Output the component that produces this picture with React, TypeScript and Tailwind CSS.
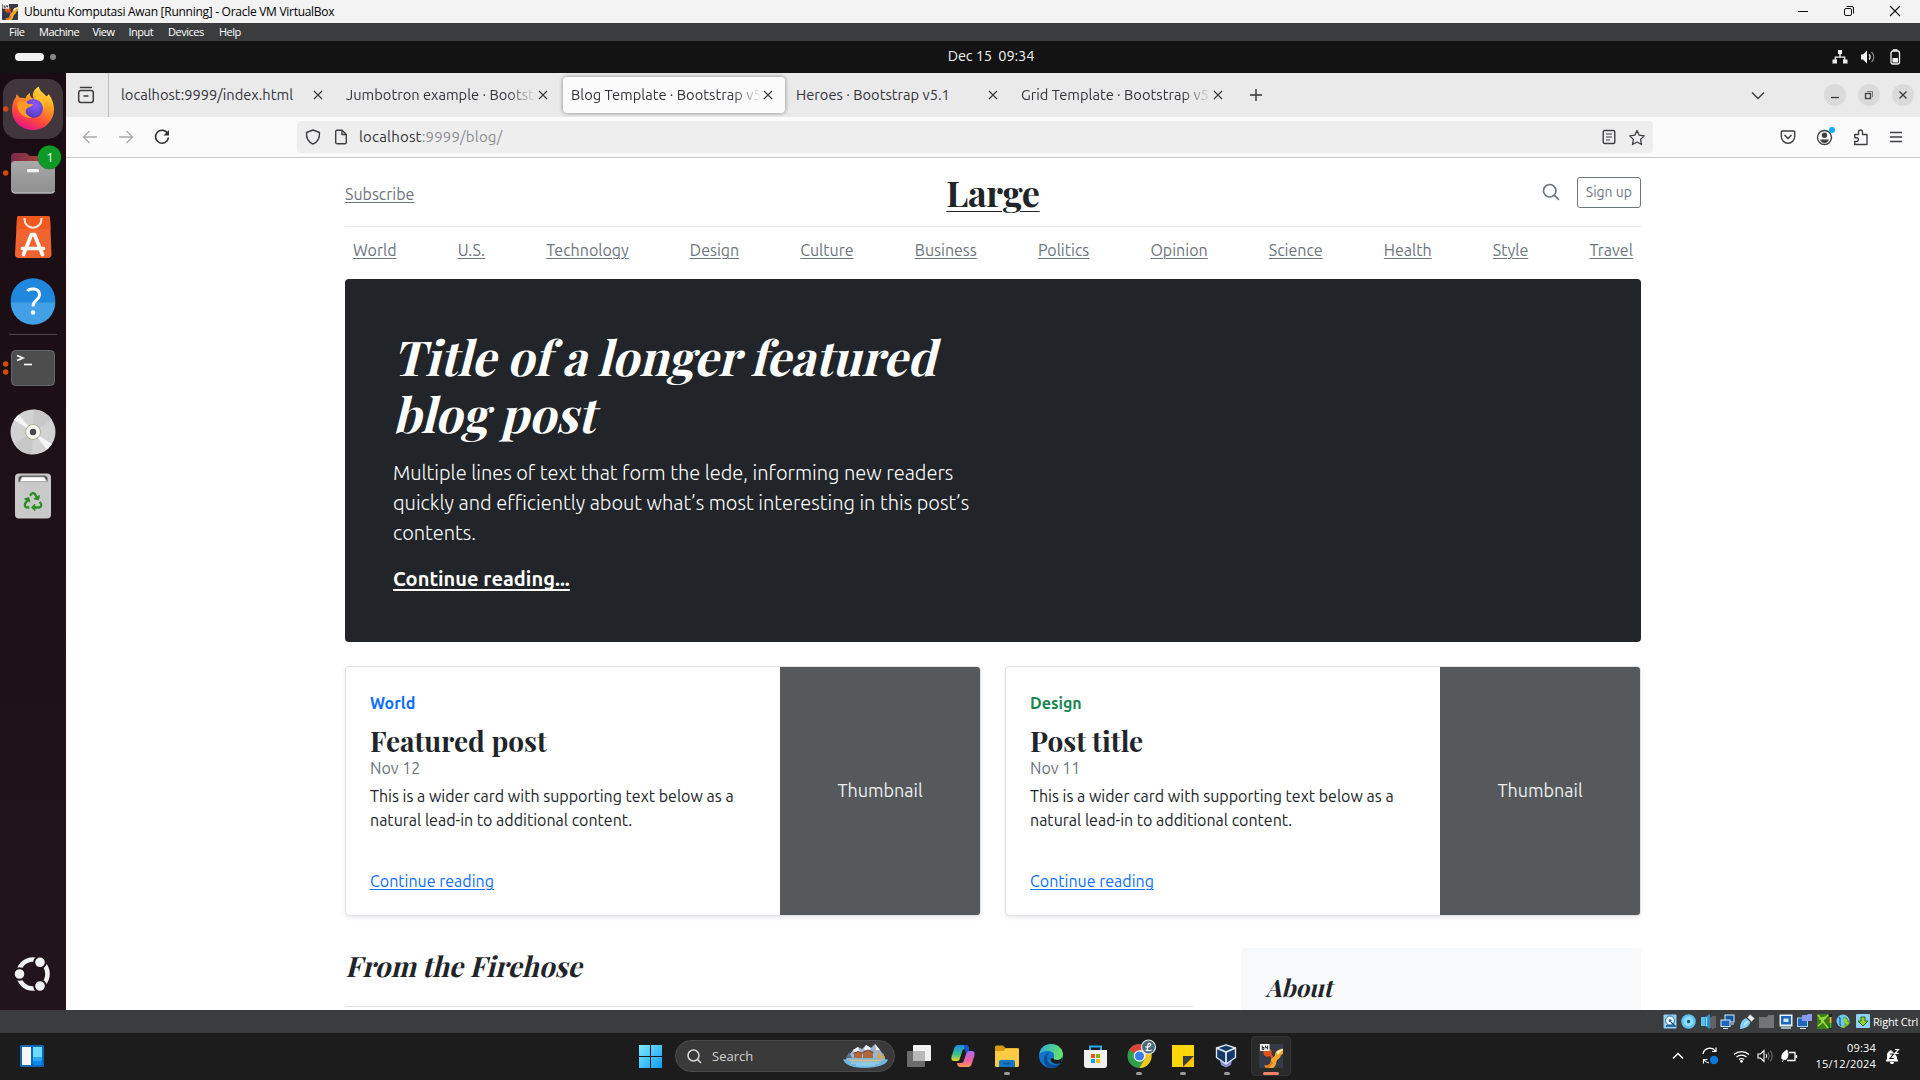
import type { ReactNode } from "react";
import { FaRecycle } from "react-icons/fa";

const UI = "font-['Ubuntu_Sans','Ubuntu','Open_Sans',sans-serif]";
const WIN = "font-['Open_Sans','Noto_Sans',sans-serif]";
const DISPLAY = "font-['Playfair_Display','Liberation_Serif',serif] font-bold";

function Svg({ w, h, vb, children, className }: { w: number; h: number; vb?: string; children: ReactNode; className?: string }) {
  return (
    <svg width={w} height={h} viewBox={vb ?? `0 0 ${w} ${h}`} fill="none" className={`block shrink-0 ${className ?? ""}`}>
      {children}
    </svg>
  );
}

/* ---------- VirtualBox window chrome ---------- */

function VmLogo({ size }: { size: number }) {
  return (
    <Svg w={size} h={size} vb="0 0 24 24">
      <rect width="24" height="24" rx="1" fill="#343a48" />
      <path d="M5 21.500C9 22 12 20 12 16C12 13.500 15 14 16 11C16.500 8 17 6 24 4.500V10C21 10.500 22 13 20 14.500C17.500 16 17.500 17 17 19.500C16.500 22 15.500 23 14 24H7Z" fill="#f6a531" />
      <path d="M6 21.500C9 22 12 20 12 16.500L14 19L10 24H7Z" fill="#e07a18" />
      <path d="M17.500 8C19 6.500 21 5.500 24 5V6.500C21 7.500 20 9 19 11Z" fill="#fff0b8" />
      <circle cx="8.500" cy="8.500" r="4.200" fill="#e2511a" />
      <path d="M11 10.500L13.500 13.500" stroke="#e2511a" strokeWidth="2.500" />
      <rect x="1" width="9.500" height="7" fill="#fff" />
      <path d="M3.200 1.500V5.500H5V3.500H3.200M6.500 1.500V3.800H9M8.600 1.500V5.500" stroke="#222" strokeWidth="1" />
    </Svg>
  );
}

function TitleBar() {
  return (
    <div className={`flex h-[23px] shrink-0 items-center bg-[#f3f3f3] pl-0.5 text-black ${WIN}`}>
      <VmLogo size={16} />
      <span className="ml-1.5 text-[12px] leading-4 tracking-[-0.28px]">Ubuntu Komputasi Awan [Running] - Oracle VM VirtualBox</span>
      <div className="mb-0.5 ml-auto flex">
        <div className="flex w-[46px] justify-center"><Svg w={12} h={12}><path d="M1 6.500H11" stroke="#111" /></Svg></div>
        <div className="flex w-[46px] justify-center">
          <Svg w={12} h={12}>
            <rect x="1.500" y="3.500" width="7" height="7" rx="1.500" stroke="#111" />
            <path d="M3.500 1.500H9A1.800 1.800 0 0 1 10.500 3V8.500" stroke="#111" />
          </Svg>
        </div>
        <div className="flex w-[46px] justify-center"><Svg w={12} h={12}><path d="M1 1L11 11M11 1L1 11" stroke="#111" strokeWidth="1.100" /></Svg></div>
        <div className="w-0.5" />
      </div>
    </div>
  );
}

function MenuBar() {
  return (
    <div className={`flex h-[18px] shrink-0 items-center bg-[#3b3c3e] pl-[9px] text-[11px] leading-4 tracking-[-0.5px] text-white ${WIN}`}>
      <span className="w-[30px]">File</span>
      <span className="w-[53.500px]">Machine</span>
      <span className="w-[36px]">View</span>
      <span className="w-[39.500px]">Input</span>
      <span className="w-[51px]">Devices</span>
      <span>Help</span>
    </div>
  );
}

function StatusBar() {
  return (
    <div className={`flex h-[23px] shrink-0 items-center justify-end gap-[4.500px] bg-[#3b3c3e] pr-0.5 text-white ${WIN}`}>
      <Svg w={14} h={15}>
        <rect x=".5" y=".5" width="13" height="14" rx="1" fill="#8ed3f7" />
        <circle cx="7" cy="6.500" r="4.500" fill="#fff" stroke="#1b6fae" />
        <circle cx="7" cy="6.500" r="1.500" fill="#1b6fae" />
        <path d="M8 8L12 12H3" stroke="#174f80" strokeWidth="1.300" />
      </Svg>
      <Svg w={15} h={15}>
        <circle cx="7.500" cy="7.500" r="7.300" fill="#5cc0ef" />
        <circle cx="7.500" cy="7.500" r="5" fill="#8fdcfb" />
        <circle cx="7.500" cy="7.500" r="1.700" fill="#0d5c94" />
      </Svg>
      <Svg w={15} h={15}>
        <path d="M0 3H4V12H0Z" fill="#5cc0ef" />
        <path d="M4 3L9 0V15L4 12Z" fill="#2e8fd0" />
        <path d="M5.500 3V12" stroke="#9adcf9" strokeWidth="1.200" />
        <path d="M10 3V14M12 2V15M14 2V14" stroke="#777" strokeWidth="1.300" />
      </Svg>
      <Svg w={15} h={15}>
        <rect x="5" y="1" width="9" height="7" fill="#1756a3" stroke="#d7ebf8" />
        <rect x="1" y="6" width="9" height="6.500" fill="#1d66bb" stroke="#d7ebf8" />
        <path d="M3 14.500H8M11 10H14" stroke="#d7ebf8" />
      </Svg>
      <Svg w={15} h={15}>
        <path d="M0 15C0 9 2 6 6 4L10.500 8C9 12.500 6 14.500 0 15Z" fill="#7fd0f8" />
        <path d="M7.500 3.500L10 .5L14.500 4.500L11.500 7.500Z" fill="#f3f3f3" stroke="#999" strokeWidth=".6" />
        <path d="M4 11L8 7" stroke="#c7ecfd" strokeWidth="1.500" />
      </Svg>
      <Svg w={15} h={15}><path d="M0 3H8L9.500 1H15V14H0Z" fill="#737475" /></Svg>
      <Svg w={14} h={15}>
        <rect x=".5" y=".5" width="13" height="12" fill="#e4f3fd" />
        <rect x="2" y="2" width="10" height="8.500" fill="#1d66bb" />
        <rect x="4.500" y="4.500" width="5" height="3.500" fill="#cfe8fa" />
        <path d="M2 14H12" stroke="#b7d6ea" strokeWidth="1.500" />
      </Svg>
      <Svg w={15} h={15}>
        <rect x=".5" y="4" width="10" height="8.500" fill="#1d66bb" stroke="#a9d4f1" />
        <path d="M5 1H10L11 0H15V7H5Z" fill="#8b9af0" />
        <path d="M3 14.500H9" stroke="#d7ebf8" />
      </Svg>
      <Svg w={15} h={15}>
        <rect width="12" height="15" fill="#3f7d1c" />
        <path d="M1 1L11 14M11 1L4 8M1 12L7 7M2 5L9 3" stroke="#9be03c" strokeWidth="1.500" />
        <rect x="12" width="3" height="15" fill="#222" />
        <path d="M13.500 3V9" stroke="#f0c51d" strokeWidth="2" />
        <path d="M13.500 9V14" stroke="#2fc52a" strokeWidth="2" />
      </Svg>
      <Svg w={15} h={15}>
        <circle cx="7" cy="7" r="6.500" fill="#6ec6f2" />
        <path d="M3 3C6 6 2 8 5 12" stroke="#1d74b5" strokeWidth="1.500" />
        <path d="M7 4Q12 3 12 8H14.500L11.500 12L8 8.500M9 10V14H5" stroke="#3a6b12" strokeWidth=".6" fill="#8fd430" />
      </Svg>
      <Svg w={14} h={15}>
        <rect width="14" height="14" rx="1" fill="#8ed3f7" />
        <path d="M5 3H9V7H12L7 12L2 7H5Z" fill="#8fd430" stroke="#2f6b12" />
      </Svg>
      <span className="-ml-px text-[11px] leading-4 tracking-[-0.22px]">Right Ctrl</span>
    </div>
  );
}

/* ---------- GNOME shell ---------- */

function TopBar() {
  return (
    <div className={`flex h-8 shrink-0 items-center bg-[#131313] pr-[18px] text-[#f2f2f2] ${UI}`}>
      <div className="flex w-[66px] items-center gap-1.5 pl-[15px]">
        <div className="h-2 w-[29px] rounded-full bg-[#f2f2f2]" />
        <div className="size-1.5 rounded-full bg-[#878787]" />
      </div>
      <span className="mt-[-2px] flex-1 whitespace-pre pl-[18px] text-center text-[14.670px] leading-5 tracking-[-0.15px]">Dec 15  09:34</span>
      <div className="-ml-[66px] flex items-center justify-end gap-[12px]">
        <Svg w={16} h={16}>
          <path d="M6 1H10V5H8.700V7.500H13.300V10.500H15.500V14.500H11V10.500H12V8.800H4V10.500H5V14.500H.5V10.500H2.700V7.500H7.300V5H6Z" fill="#f2f2f2" />
        </Svg>
        <Svg w={16} h={16}>
          <path d="M1 5.500H3L7 1.500V14.500L3 10.500H1Z" fill="#f2f2f2" />
          <path d="M9 5.500C10.500 7 10.500 9 9 10.500" stroke="#f2f2f2" strokeWidth="1.400" />
          <path d="M11.500 3C14.500 6 14.500 10 11.500 13" stroke="#8a8a8a" strokeWidth="1.300" />
        </Svg>
        <Svg w={14} h={16}>
          <rect x="3" y="2" width="8.500" height="13" rx="2" stroke="#f2f2f2" strokeWidth="1.300" />
          <path d="M5 1H9.500" stroke="#f2f2f2" strokeWidth="1.600" />
          <rect x="4.500" y="9" width="5.500" height="4.500" fill="#f2f2f2" />
        </Svg>
      </div>
    </div>
  );
}

function Tile({ children }: { children: ReactNode }) {
  return <Svg w={66} h={64}>{children}</Svg>;
}

function Launcher() {
  return (
    <div className="flex w-[66px] shrink-0 flex-col bg-linear-to-b from-[#190d13] to-[#22141c] pt-1">
      <Tile>
        <defs>
          <linearGradient id="ffBody" x1=".8" y1="0" x2=".3" y2="1">
            <stop offset="0" stopColor="#fff04a" />
            <stop offset=".35" stopColor="#ffa01f" />
            <stop offset=".7" stopColor="#ff4a3c" />
            <stop offset="1" stopColor="#e3128a" />
          </linearGradient>
          <radialGradient id="ffGlobe" cx=".6" cy=".3" r=".8">
            <stop offset="0" stopColor="#9059ff" />
            <stop offset="1" stopColor="#4a35b8" />
          </radialGradient>
        </defs>
        <rect x="3" y="2" width="60" height="60" rx="15" fill="#40363b" />
        <circle cx="5.700" cy="32" r="2.700" fill="#d9480f" />
        <path d="M12 33C12 27 13.500 23 16 20L16.500 17L20 21C22 20.500 24 21 25.500 21.500C26 19 28 17 30 16C29.500 19 31 21 34 22L33 20C32 16 35 11 39 9.500C39 14 43 15 46 19C47 20 48 18 48.500 17C52 21 54 27 54 32C54 43.500 45 53 33 53C21 53 12 44 12 33Z" fill="url(#ffBody)" />
        <circle cx="33.500" cy="31.500" r="9.500" fill="url(#ffGlobe)" />
        <path d="M17 26C21 24 26 24 28 27H33C32 30 28 30 26.500 32C24 35 27 39 32 41C24 42 17 36 17 26Z" fill="#ff9a22" />
        <path d="M34 22C40 22 44 27 43.500 33C46 27 43 20 37 18Z" fill="#ffc52e" />
      </Tile>
      <Tile>
        <defs>
          <linearGradient id="filesFront" x1="0" y1="0" x2="0" y2="1">
            <stop offset="0" stopColor="#a8a8a8" />
            <stop offset="1" stopColor="#8f8f8f" />
          </linearGradient>
          <linearGradient id="filesBack" x1="0" y1="0" x2="1" y2="0">
            <stop offset="0" stopColor="#772a4c" />
            <stop offset="1" stopColor="#c4492f" />
          </linearGradient>
        </defs>
        <circle cx="5.700" cy="32" r="2.700" fill="#d9480f" />
        <path d="M11 16A4 4 0 0 1 15 12H25C28 12 28 15 31 15H51A4 4 0 0 1 55 19V30H11Z" fill="url(#filesBack)" />
        <rect x="11" y="20" width="44" height="32.500" rx="4" fill="url(#filesFront)" />
        <path d="M12 50Q13 52 15 52H51Q54 52 54.500 50" stroke="#c9c9c9" />
        <rect x="27" y="28" width="12" height="3.200" rx="1" fill="#f4f4f4" />
        <circle cx="49.500" cy="16.500" r="12" fill="#0a5a18" opacity=".6" />
        <circle cx="49.500" cy="16" r="11.500" fill="#0f9a27" />
        <text x="50" y="21" textAnchor="middle" fontSize="13" fill="#fff" className={UI}>1</text>
      </Tile>
      <Tile>
        <path d="M19 11H48A2 2 0 0 1 50 13L51.500 49A3.500 3.500 0 0 1 48 53H18.500A3.500 3.500 0 0 1 15 49L17 13A2 2 0 0 1 19 11Z" fill="#f0642f" />
        <path d="M19 11H48A2 2 0 0 1 50 13L50.500 24H16.500L17 13A2 2 0 0 1 19 11Z" fill="#f05a20" />
        <path d="M24.500 13C24 26 42 26 41.500 13" stroke="#fbe9e1" strokeWidth="2" />
        <path d="M23.500 49.500L31.500 29.500H34.500L42.500 49.500M22.500 43.500H43.500" stroke="#fff" strokeWidth="3.600" strokeLinecap="round" strokeLinejoin="round" />
      </Tile>
      <Tile>
        <circle cx="33" cy="31.500" r="22.300" fill="#1f87dc" />
        <path d="M10.700 33.500H55.300A22.300 22.300 0 0 1 10.700 33.500Z" fill="#42a1e6" />
        <path d="M27.500 22C29 19.500 39.500 18 39.500 26C39.500 31.500 33 31 33 37.500" stroke="#fff" strokeWidth="3" />
        <circle cx="33" cy="43.500" r="2.300" fill="#fff" />
      </Tile>
      <div className="mx-[9px] my-px h-px bg-[#4d444a]" />
      <Tile>
        <circle cx="5.700" cy="28" r="2.700" fill="#d9480f" />
        <circle cx="5.700" cy="36" r="2.700" fill="#d9480f" />
        <rect x="11.500" y="14.500" width="43" height="35" rx="4" fill="#4d4d4d" stroke="#666" />
        <path d="M17 19.500L23 22L17 24.500" stroke="#fff" strokeWidth="1.700" />
        <path d="M24 28.500H32" stroke="#fff" strokeWidth="1.600" />
      </Tile>
      <Tile>
        <circle cx="33" cy="32" r="22.500" fill="#d2d2d2" />
        <path d="M33 32L14 20A22.500 22.500 0 0 1 19 14.500ZM33 32L52 44A22.500 22.500 0 0 1 47 49.500Z" fill="#f4f4f4" />
        <path d="M33 32L34 9.500A22.500 22.500 0 0 1 52 20ZM33 32L32 54.500A22.500 22.500 0 0 1 14 44Z" fill="#c8c8c8" />
        <circle cx="33" cy="32" r="7.500" fill="#fafafa" stroke="#b5ad94" />
        <circle cx="33" cy="32" r="3.200" fill="#4a4a4a" />
      </Tile>
      <Tile>
        <rect x="15" y="9.500" width="36" height="45" rx="4" fill="#c9c9c9" />
        <path d="M18.500 18V14Q19 11.500 22 11.500H44Q47 11.500 47.500 14V18Z" fill="#555" />
        <path d="M20 17.500L22 13H44L47 17.500Z" fill="#fff" stroke="#aaa" strokeWidth=".7" />
        <FaRecycle x={23.500} y={28} size={19} color="#2a9022" />
      </Tile>
      <div className="mb-[3px] mt-auto">
        <Tile>
          <circle cx="33" cy="31" r="14.500" stroke="#f2f2f2" strokeWidth="4.600" />
          {[[19.500, 31], [40, 19.300], [40, 43]].map(([x, y]) => (
            <circle key={`${x}-${y}`} cx={x} cy={y} r="5.800" fill="#f2f2f2" stroke="#21141b" strokeWidth="2" />
          ))}
        </Tile>
      </div>
    </div>
  );
}

/* ---------- Firefox ---------- */

const TABS = [
  { label: "localhost:9999/index.html", fade: false, active: false },
  { label: "Jumbotron example · Bootstrap v5.1", fade: true, active: false },
  { label: "Blog Template · Bootstrap v5.1", fade: true, active: true },
  { label: "Heroes · Bootstrap v5.1", fade: false, active: false },
  { label: "Grid Template · Bootstrap v5.1", fade: true, active: false },
];

function TabStrip() {
  return (
    <div className="flex h-11 shrink-0 items-center bg-[#eaeaea]">
      <div className="flex h-full w-[42.500px] items-center justify-center border-r border-[#bfbfbf] pr-0.5">
        <Svg w={18} h={18}>
          <path d="M3.500 1.500H14.500" stroke="#3c3c3c" strokeWidth="1.400" strokeLinecap="round" />
          <rect x="1.700" y="4.500" width="14.600" height="12" rx="2.200" stroke="#3c3c3c" strokeWidth="1.500" />
          <path d="M6.500 10H11.500" stroke="#3c3c3c" strokeWidth="1.500" />
        </Svg>
      </div>
      <div className="ml-[4.500px] flex">
        {TABS.map((t) => (
          <div key={t.label} className="w-[225px] pr-[3px]">
            <div className={t.active ? "flex h-9 items-center rounded bg-[#fbfbfb] pl-2 shadow-[0_0_4px_rgba(0,0,0,.45)]" : "flex h-9 items-center pl-2"}>
              <span
                className={
                  t.fade
                    ? "w-[190px] overflow-hidden whitespace-nowrap text-[14.670px] text-[#33333a] mask-r-from-85% mask-r-to-100%"
                    : "w-[190px] overflow-hidden whitespace-nowrap text-[14.670px] text-[#33333a]"
                }
              >
                {t.label}
              </span>
              <Svg w={10} h={10} className="ml-[2px]"><path d="M1 1L9 9M9 1L1 9" stroke="#3c3c3c" strokeWidth="1.200" /></Svg>
            </div>
          </div>
        ))}
      </div>
      <Svg w={14} h={14} className="ml-[11px]"><path d="M7 1V13M1 7H13" stroke="#333" strokeWidth="1.400" /></Svg>
      <div className="ml-auto flex items-center pr-1.5">
        <Svg w={14} h={9} className="mr-[59px]"><path d="M1 1.500L7 7.500L13 1.500" stroke="#3c3c3c" strokeWidth="1.400" /></Svg>
        <div className="flex gap-3">
          <Svg w={22} h={22}><circle cx="11" cy="11" r="11" fill="#dadada" /><path d="M7 13.500H15" stroke="#3c3c3c" strokeWidth="1.300" /></Svg>
          <Svg w={22} h={22}>
            <circle cx="11" cy="11" r="11" fill="#dadada" />
            <rect x="7.500" y="9.500" width="5" height="5" stroke="#3c3c3c" strokeWidth="1.300" />
            <path d="M9 7.500H14.500V13" stroke="#777" />
          </Svg>
          <Svg w={22} h={22}><circle cx="11" cy="11" r="11" fill="#dadada" /><path d="M7.500 7.500L14.500 14.500M14.500 7.500L7.500 14.500" stroke="#3c3c3c" strokeWidth="1.400" /></Svg>
        </div>
      </div>
    </div>
  );
}

function NavBar() {
  const k = "#3f3f44";
  return (
    <div className="flex h-[41px] shrink-0 items-center border-b border-[#c6c6c6] bg-[#fbfbfb] pl-4">
      <Svg w={16} h={16}><path d="M15 8H1.500M7.500 2L1.500 8L7.500 14" stroke="#aaa" strokeWidth="1.400" /></Svg>
      <Svg w={16} h={16} className="ml-5"><path d="M1 8H14.500M8.500 2L14.500 8L8.500 14" stroke="#aaa" strokeWidth="1.400" /></Svg>
      <Svg w={16} h={16} className="ml-5">
        <path d="M13.700 4.500A6.500 6.500 0 1 0 14.500 8.500" stroke="#2f2f33" strokeWidth="1.600" />
        <path d="M15 1V6.500H9.500Z" fill="#2f2f33" />
      </Svg>
      <div className="ml-[127px] flex h-8 w-[1356px] items-center rounded bg-[#eee] pl-2">
        <Svg w={16} h={16}>
          <path d="M8 1L14.500 3.500C14.800 9 13 13 8 15C3 13 1.200 9 1.500 3.500Z" stroke={k} strokeWidth="1.400" strokeLinejoin="round" />
        </Svg>
        <Svg w={14} h={16} className="ml-[13px]">
          <path d="M1.700 2.500A1.200 1.200 0 0 1 2.900 1.300H8L12.300 5.500V13.500A1.200 1.200 0 0 1 11.100 14.700H2.900A1.200 1.200 0 0 1 1.700 13.500Z" stroke={k} strokeWidth="1.400" />
          <path d="M8 1.300V5.500H12.300" stroke={k} strokeWidth="1.400" />
        </Svg>
        <span className="ml-[11px] text-[15px] tracking-[0.180px] text-[#33333a]">localhost<span className="text-[#8d8d90]">:9999/blog/</span></span>
        <Svg w={14} h={16} className="ml-auto">
          <rect x="1.200" y="1.500" width="11.600" height="13" rx="1.500" stroke={k} strokeWidth="1.400" />
          <path d="M4 5H10M4 8H10M4 11H8" stroke={k} strokeWidth="1.200" />
        </Svg>
        <Svg w={18} h={17} className="ml-3 mr-[7px]">
          <path d="M9 1.500L11.200 6.200L16.300 6.900L12.600 10.400L13.500 15.500L9 13L4.500 15.500L5.400 10.400L1.700 6.900L6.800 6.200Z" stroke={k} strokeWidth="1.300" strokeLinejoin="round" />
        </Svg>
      </div>
      <div className="ml-auto flex items-center pr-[18px]">
        <Svg w={16} h={16} className="mr-5">
          <path d="M2.500 2H13.500A1.200 1.200 0 0 1 14.700 3.200V7.500A6.700 6.700 0 0 1 1.300 7.500V3.200A1.200 1.200 0 0 1 2.500 2Z" stroke={k} strokeWidth="1.400" />
          <path d="M4.500 6L8 9.500L11.500 6" stroke={k} strokeWidth="1.500" />
        </Svg>
        <Svg w={20} h={20} className="mr-4">
          <circle cx="8.500" cy="10.500" r="7" stroke={k} strokeWidth="1.400" />
          <circle cx="8.500" cy="8.300" r="2.700" fill={k} />
          <path d="M4 12.500H13Q11.500 16 8.500 16Q5.500 16 4 12.500Z" fill={k} />
          <circle cx="16" cy="3" r="3" fill="#00b3f4" />
        </Svg>
        <Svg w={18} h={18} className="mr-5">
          <path d="M2.700 6.500H6.500V4A2 2 0 0 1 10.500 4V6.500H15V16.500H2.700V13.500H4.500A1.900 1.900 0 0 0 4.500 9.700H2.700Z" stroke={k} strokeWidth="1.400" strokeLinejoin="round" />
        </Svg>
        <Svg w={12} h={12}><path d="M0 1.500H12M0 6H12M0 10.500H12" stroke={k} strokeWidth="1.300" /></Svg>
      </div>
    </div>
  );
}

/* ---------- Blog page ---------- */

const SECTIONS = ["World", "U.S.", "Technology", "Design", "Culture", "Business", "Politics", "Opinion", "Science", "Health", "Style", "Travel"];

const LINK = "underline underline-offset-2 decoration-1";

function PostCard({ tag, tagClass, title, date }: { tag: string; tagClass: string; title: string; date: string }) {
  return (
    <div className="flex h-[250px] overflow-hidden rounded border border-[#dee2e6] shadow-[0_2px_4px_rgba(0,0,0,.075)]">
      <div className="flex flex-1 flex-col items-start px-6 pb-[21px] pt-[25px]">
        <strong className={`mb-2 font-bold ${tagClass}`}>{tag}</strong>
        <h3 className={`text-[28px] leading-[33px] ${DISPLAY}`}>{title}</h3>
        <div className="mb-1 text-[#6c757d]">{date}</div>
        <p className="mb-auto w-[380px]">This is a wider card with supporting text below as a natural lead-in to additional content.</p>
        <a className={`text-[#0d6efd] ${LINK}`}>Continue reading</a>
      </div>
      <div className="flex w-[200px] items-center justify-center bg-[#55595c] text-[18px] text-[#eceeef]">Thumbnail</div>
    </div>
  );
}

function Slanted({ children }: { children: ReactNode }) {
  return <span className="block w-max origin-[0_75%] -skew-x-[14deg] whitespace-nowrap">{children}</span>;
}

function Blog() {
  return (
    <div className="min-h-0 flex-1 overflow-hidden bg-white pl-[279px] text-base leading-6 text-[#212529]">
      <div className="w-[1296px]">
        <header className="grid h-[69px] grid-cols-3 items-center border-b border-[#e5e5e5]">
          <a className={`pt-[5px] text-[#6c757d] ${LINK}`}>Subscribe</a>
          <a className={`text-center text-[36px] leading-9 tracking-[-0.3px] underline decoration-1 underline-offset-[4px] ${DISPLAY}`}>Large</a>
          <div className="flex items-center justify-end">
            <Svg w={20} h={20} vb="0 0 24 24" className="mr-4">
              <circle cx="10.500" cy="10.500" r="7.500" stroke="#6c757d" strokeWidth="2" />
              <path d="M21 21L15.800 15.800" stroke="#6c757d" strokeWidth="2" strokeLinecap="round" />
            </Svg>
            <a className="rounded-[3px] border border-[#6c757d] px-2 py-1 text-[14px] leading-[21px] text-[#6c757d]">Sign up</a>
          </div>
        </header>
        <nav className="mb-2 flex h-11 items-start justify-between pt-1">
          {SECTIONS.map((s) => (
            <a key={s} className={`p-2 text-[#6c757d] ${LINK}`}>{s}</a>
          ))}
        </nav>
        <section className="mb-6 h-[363px] rounded bg-[#212529] px-12 pt-[49px] text-white">
          <h1 className={`pl-px text-[48px] leading-[57.200px] ${DISPLAY}`}>
            <Slanted>Title of a longer featured</Slanted>
            <Slanted>blog post</Slanted>
          </h1>
          <p className="my-4 w-[600px] text-[20px] font-light leading-[30px]">
            Multiple lines of text that form the lede, informing new readers quickly and efficiently about what’s most interesting in this post’s contents.
          </p>
          <a className="text-[20px] font-bold leading-[30px] tracking-[0.02px] underline decoration-2 underline-offset-[3px]">Continue reading...</a>
        </section>
        <div className="mb-8 grid grid-cols-2 gap-6">
          <PostCard tag="World" tagClass="text-[#0d6efd]" title="Featured post" date="Nov 12" />
          <PostCard tag="Design" tagClass="text-[#198754]" title="Post title" date="Nov 11" />
        </div>
        <div className="flex items-start justify-between">
          <h3 className={`w-[848px] border-b border-[#dee2e6] pb-[23px] pl-px pt-px text-[28px] leading-[33.600px] ${DISPLAY}`}>
            <Slanted>From the Firehose</Slanted>
          </h3>
          <aside className="h-[200px] w-[400px] rounded bg-[#f8f9fa] px-6 pt-[25px]">
            <h4 className={`pl-px text-[24px] leading-[28.800px] ${DISPLAY}`}><Slanted>About</Slanted></h4>
          </aside>
        </div>
      </div>
    </div>
  );
}

/* ---------- Windows taskbar ---------- */

function App44({ children, mark, active }: { children: ReactNode; mark?: boolean; active?: boolean }) {
  return (
    <div className="flex h-full w-11 items-center justify-center">
      <div className={active ? "relative flex h-10 w-10 items-center justify-center rounded border border-[#343434] bg-[#2a2a2a]" : "relative flex h-10 w-10 items-center justify-center"}>
        {children}
        {mark && <span className={active ? "absolute bottom-0 h-[3px] w-4 rounded-full bg-[#f28267]" : "absolute bottom-px h-[3px] w-1.5 rounded-full bg-[#9a9a9a]"} />}
      </div>
    </div>
  );
}

function Taskbar() {
  return (
    <div className={`flex h-[47px] shrink-0 items-center bg-[#1c1c1c] pb-px ${WIN}`}>
      <Svg w={24} h={22} className="ml-5">
        <rect width="24" height="22" rx="1.500" fill="#1067b8" />
        <rect x="2" y="2" width="9" height="18" fill="#f5f5f5" />
        <rect x="13" y="2" width="9" height="10" fill="#6bdcff" />
        <rect x="13" y="12" width="9" height="4" fill="#2aa8f8" />
        <rect x="13" y="16" width="9" height="4" fill="#0a86ef" />
      </Svg>
      <Svg w={23} h={23} className="ml-[595px]">
        <defs>
          <linearGradient id="win" x1="0" y1="0" x2="1" y2="1">
            <stop offset="0" stopColor="#7feafc" />
            <stop offset="1" stopColor="#0f9bf5" />
          </linearGradient>
        </defs>
        <path d="M0 0H11V11H0ZM12 0H23V11H12ZM0 12H11V23H0ZM12 12H23V23H12Z" fill="url(#win)" />
      </Svg>
      <div className="ml-[13px] flex h-8 w-[220px] items-center rounded-full border border-[#4a4a4a] bg-[#3a3a3a] pl-[11px] pr-1.5">
        <Svg w={15} h={15}><circle cx="6.500" cy="6.500" r="5.500" stroke="#d9d9d9" strokeWidth="1.500" /><path d="M10.500 10.500L14 14" stroke="#d9d9d9" strokeWidth="1.600" /></Svg>
        <span className="ml-2.5 text-[13px] leading-5 text-[#d0d0d0]">Search</span>
        <Svg w={45} h={24} className="ml-auto">
          <path d="M3 15L10 6L15 3L19 5L23 1L28 4L32 0L37 6L42 13V16H3Z" fill="#9fb2cf" />
          <path d="M10 6L15 3L17 8L13 10ZM23 1L28 4L25 8L21 5ZM32 0L37 6L33 6Z" fill="#eef3fa" />
          <path d="M0 15.500Q22 12 45 15.500Q44 21 32 23Q22 25 11 23Q2 21 0 15.500Z" fill="#6fb7dd" />
          <path d="M4 15.500H42L36 17.500H9Z" fill="#d9b98a" />
          <path d="M8 19H36M13 21H32" stroke="#a9dcf3" />
          <path d="M11 9L15 7.500L19 9V14H11ZM20 8L25 6L30 8V14H20Z" fill="#b0683a" />
          <path d="M10.500 9.500L15 7.500L19.500 9.500M19.500 8.500L25 6L30.500 8.500" stroke="#74412a" />
          <path d="M34 14L36 7L38 14ZM38.500 14L40 9L42 14Z" fill="#d9a92c" />
          <path d="M3 14L6 8L9 14Z" fill="#54708b" />
        </Svg>
      </div>
      <div className="ml-0.5 flex h-full">
        <App44>
          <Svg w={24} h={22}>
            <rect x="6" width="18" height="16" rx="1" fill="#f1f1f1" />
            <rect y="6" width="18" height="16" rx="1" fill="#6c6c6c" />
            <rect x="6" y="6" width="12" height="10" fill="#b9b9b9" />
          </Svg>
        </App44>
        <App44>
          <Svg w={24} h={22}>
            <defs>
              <linearGradient id="cpA" x1="0" y1="0" x2="0" y2="1">
                <stop offset="0" stopColor="#1a8be8" />
                <stop offset=".6" stopColor="#3ec08a" />
                <stop offset="1" stopColor="#f3d42a" />
              </linearGradient>
              <linearGradient id="cpB" x1="0" y1="0" x2="0" y2="1">
                <stop offset="0" stopColor="#a76cf5" />
                <stop offset=".6" stopColor="#ee5d9d" />
                <stop offset="1" stopColor="#fb9a55" />
              </linearGradient>
            </defs>
            <path d="M7 0H15C17 0 17.500 1.500 18 4H14C12 4 11.500 5 11 7L9 13C8.500 15.500 7.500 16 5.500 16H3C0 16 0 13 1 10L3 4C4 1 5 0 7 0Z" fill="url(#cpA)" />
            <path d="M17 22H9C7 22 6.500 20.500 6 18H10C12 18 12.500 17 13 15L15 9C15.500 6.500 16.500 6 18.500 6H21C24 6 24 9 23 12L21 18C20 21 19 22 17 22Z" fill="url(#cpB)" />
            <path d="M13 0H15C17.500 0 17.500 3 18.500 6C16.500 6 15.500 7 15 9L13.500 4Z" fill="#1753c4" />
          </Svg>
        </App44>
        <App44 mark>
          <Svg w={24} h={22}>
            <path d="M0 2A1.500 1.500 0 0 1 1.500.5H8L10.500 3H22.500A1.500 1.500 0 0 1 24 4.500V20H0Z" fill="#d79a12" />
            <path d="M0 6H8.500L11 3.500H24V20.500A1.500 1.500 0 0 1 22.500 22H1.500A1.500 1.500 0 0 1 0 20.500Z" fill="#fccb45" />
            <path d="M4 22V17A2 2 0 0 1 6 15H18A2 2 0 0 1 20 17V22Z" fill="#1277c4" />
            <path d="M8 18.500H16" stroke="#0c5794" strokeWidth="1.500" />
          </Svg>
        </App44>
        <App44>
          <Svg w={24} h={24}>
            <defs>
              <linearGradient id="edA" x1="0" y1="0" x2="1" y2=".3">
                <stop offset="0" stopColor="#2aa7e4" />
                <stop offset="1" stopColor="#67e06a" />
              </linearGradient>
            </defs>
            <circle cx="12" cy="12" r="12" fill="#1273c9" />
            <path d="M.3 10.500C1 4 6 0 12 0C19 0 24 5 24 10.500C24 14 21 16 18 16C15.500 16 14 15 14.500 14C16 12.500 15.500 7 9.500 7C5 7 1.500 8.500.3 10.500Z" fill="url(#edA)" />
            <path d="M8 14C8 20 14 23 21.500 19.500C17 26 7 24.500 5 18C4 13 7 9 11 8.500C9 9.500 8 11.500 8 14Z" fill="#0c4c94" />
            <path d="M14.500 14C14 15 15.500 16 18 16C20.500 16 22.500 15 23.500 13L22 19C17 21 11.500 19 11.500 14.500Z" fill="#1c1c1c" />
          </Svg>
        </App44>
        <App44>
          <Svg w={23} h={23}>
            <path d="M6 6V1.500H17V6" stroke="#2aa7ee" strokeWidth="2" />
            <path d="M0 5H23V20A3 3 0 0 1 20 23H3A3 3 0 0 1 0 20Z" fill="#f0f0f0" />
            <path d="M7 9H11V13H7Z" fill="#f25022" /><path d="M12 9H16V13H12Z" fill="#7fba00" />
            <path d="M7 14H11V18H7Z" fill="#00a4ef" /><path d="M12 14H16V18H12Z" fill="#ffb900" />
          </Svg>
        </App44>
        <App44 mark>
          <Svg w={30} h={30} className="-mt-1 ml-[5px]">
            <circle cx="12.500" cy="17" r="12" fill="#2f9e4f" />
            <path d="M12.500 17L2.100 11A12 12 0 0 1 22.900 11H12.500Z" fill="#dd4437" />
            <path d="M12.500 11H22.900A12 12 0 0 1 12.500 29L17.700 20Z" fill="#f8c51d" />
            <circle cx="12.500" cy="17" r="5.800" fill="#fff" />
            <circle cx="12.500" cy="17" r="4.600" fill="#3b7ded" />
            <circle cx="21.500" cy="8" r="7" fill="#4d6b79" stroke="#dfe6e9" strokeWidth="1.200" />
            <path d="M19 12C22 9 20 7 21 5.500C22 3.500 24.500 4.500 23.500 6.500C22.500 8 19 9 18.500 7.500M18.500 11.500C20.500 10 22 13 24.500 11" stroke="#fff" strokeWidth="1.100" />
          </Svg>
        </App44>
        <App44 mark>
          <Svg w={22} h={22}>
            <path d="M0 0H22V11L11 22H0Z" fill="#ffd60a" />
            <path d="M11 22V11H22Z" fill="#3a3d42" />
            <path d="M22 11V22H11Z" fill="#ffc800" />
          </Svg>
        </App44>
        <App44 mark>
          <Svg w={22} h={24} className="-ml-[3px]">
            <path d="M5 16L11 20L17 16L16 21L11 23.500L6 21Z" fill="#8f8fd0" />
            <path d="M1.500 4L11 .8L20.500 4V13.500L11 20L1.500 13.500Z" fill="#163a66" stroke="#dbe7f2" strokeWidth="1.400" strokeLinejoin="round" />
            <path d="M1.500 4L11 8L20.500 4M11 8V20" stroke="#dbe7f2" strokeWidth="1.800" />
          </Svg>
        </App44>
        <App44 mark active><VmLogo size={24} /></App44>
      </div>
      <div className="ml-auto flex items-center text-white">
        <Svg w={12} h={8}><path d="M1 6.500L6 1.500L11 6.500" stroke="#fff" strokeWidth="1.500" /></Svg>
        <Svg w={18} h={18} className="ml-[17px]">
          <path d="M2 7A7 7 0 0 1 14.500 4M15 .5V4.500H11M2.500 16.500V12.500H6.500M3 13Q5 15.500 8 16" stroke="#fff" strokeWidth="1.200" />
          <circle cx="13" cy="13" r="4.200" fill="#0a78d6" />
        </Svg>
        <Svg w={17} h={13} className="ml-[14px]">
          <path d="M1 4.500A11 11 0 0 1 16 4.500M3.500 7A7.500 7.500 0 0 1 13.500 7M6 9.500A4 4 0 0 1 11 9.500" stroke="#fff" strokeWidth="1.200" />
          <circle cx="8.500" cy="11.300" r="1.400" fill="#fff" />
        </Svg>
        <Svg w={17} h={14} className="ml-[7px]">
          <path d="M1 5H3.500L7 1.500V12.500L3.500 9H1Z" stroke="#fff" strokeWidth="1.100" />
          <path d="M9 5Q10.500 7 9 9" stroke="#fff" strokeWidth="1.100" />
          <path d="M11 3Q13.500 7 11 11M13.300 1.500Q17 7 13.300 12.500" stroke="#777" />
        </Svg>
        <Svg w={17} h={14} className="ml-[7px]">
          <path d="M8 3.500H14V11.500H6M15.500 6V9" stroke="#fff" strokeWidth="1.300" />
          <path d="M1 10C0 6 2 3 6 1C7.500 4 7.500 8 5 10.500ZM1 13L4 9" fill="#fff" stroke="#fff" strokeWidth=".8" />
        </Svg>
        <div className="ml-[15px] w-[63px] text-right text-[11px] leading-4 tracking-[0.2px]">
          <div>09:34</div>
          <div>15/12/2024</div>
        </div>
        <Svg w={15} h={17} className="ml-[9px] mr-5">
          <path d="M6.500 2.500C3.500 3 2.500 5 2.500 7.500V11L1 13H13L11.500 11V9H7" fill="#fff" stroke="#fff" strokeWidth="1" />
          <path d="M2.500 6.500L7 3L11.500 8V12H2.500Z" fill="#fff" />
          <path d="M5 14.500Q7 17 9 14.500Z" fill="#fff" stroke="#fff" />
          <path d="M5 6H8.500L5 10.500H8.700" stroke="#1c1c1c" strokeWidth="1.200" />
          <path d="M10 1.500H13.500L10 5.500H13.700" stroke="#fff" strokeWidth="1.200" />
        </Svg>
      </div>
    </div>
  );
}

export default function App() {
  return (
    <div className="flex h-[1080px] w-[1920px] flex-col overflow-hidden bg-white">
      <TitleBar />
      <MenuBar />
      <TopBar />
      <div className="flex min-h-0 flex-1">
        <Launcher />
        <div className={`flex min-w-0 flex-1 flex-col ${UI}`}>
          <TabStrip />
          <NavBar />
          <Blog />
        </div>
      </div>
      <StatusBar />
      <Taskbar />
    </div>
  );
}
